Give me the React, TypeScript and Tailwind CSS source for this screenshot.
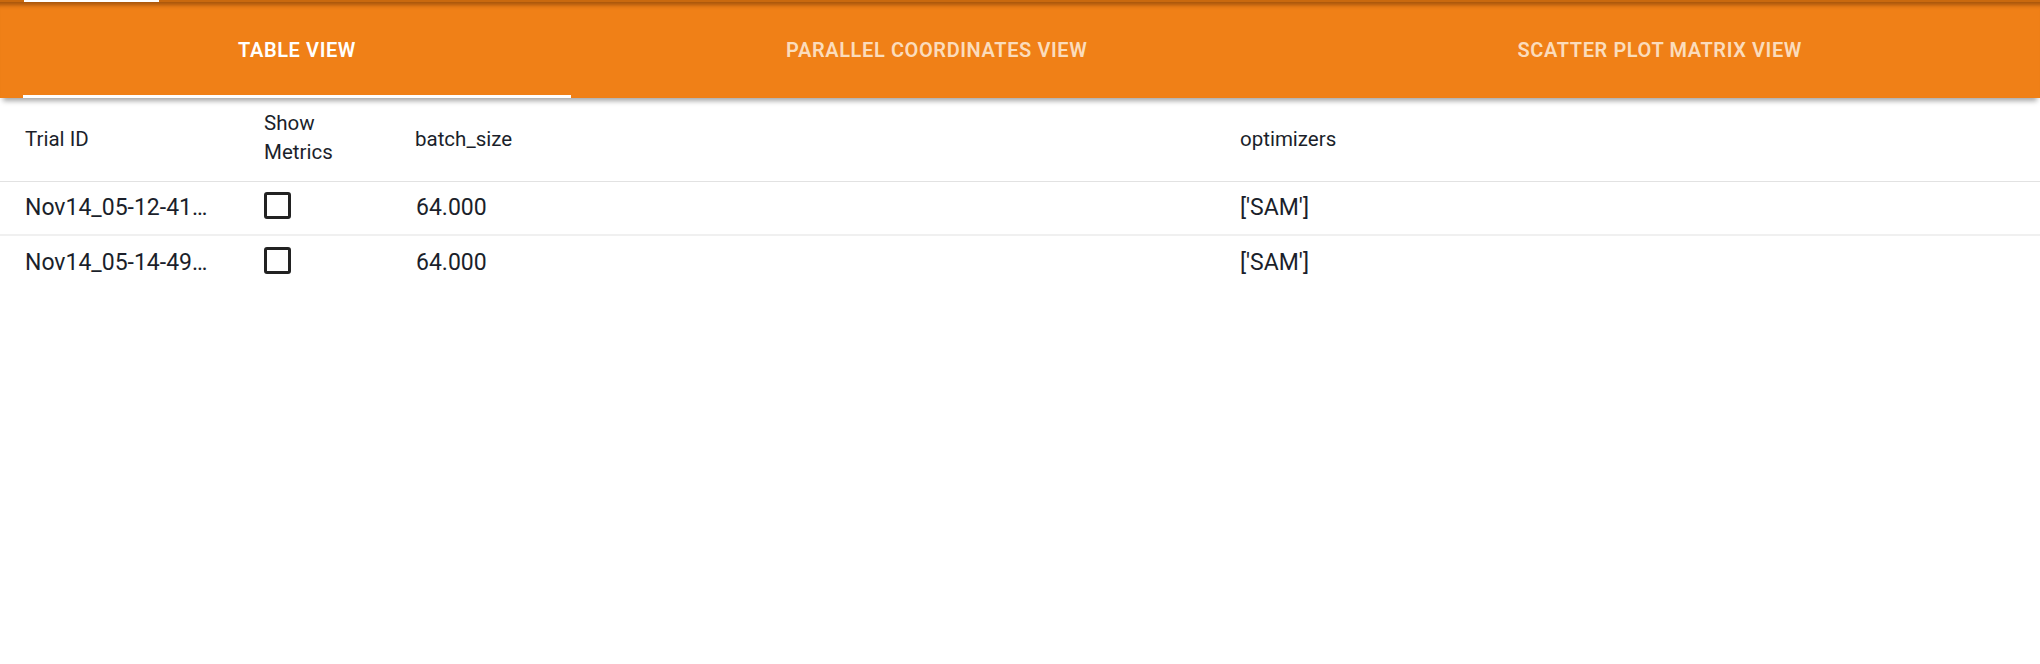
import React from 'react'

const tabs = [
  { label: 'TABLE VIEW', active: true },
  { label: 'PARALLEL COORDINATES VIEW', active: false },
  { label: 'SCATTER PLOT MATRIX VIEW', active: false },
]

const rows = [
  { id: 'Nov14_05-12-41…', batch: '64.000', opt: "['SAM']" },
  { id: 'Nov14_05-14-49…', batch: '64.000', opt: "['SAM']" },
]

const cols = 'grid grid-cols-[239px_152px_824px_1fr]'

const Checkbox = () => (
  <div className="w-[27px] h-[27px] rounded-[3px] border-[3px] border-[#222222] bg-white" />
)

const App = () => {
  return (
    <div className="w-[2040px] h-[664px] bg-white font-['Roboto',sans-serif] overflow-hidden">
      {/* app bar sliver above */}
      <div className="h-[2px] bg-[#c9690e]">
        <div className="ml-[24px] w-[135px] h-[2px] bg-white" />
      </div>

      {/* tab bar */}
      <div className="relative z-10 h-[96px] bg-[#f08017] shadow-[inset_0_7px_4px_-4px_rgba(90,40,0,0.5),0_6px_5px_-3px_rgba(0,0,0,0.35)]">
        <div className="mx-[23px] flex h-full">
          {tabs.map((t) => (
            <div
              key={t.label}
              className={`grow basis-auto px-4 flex items-center justify-center border-t-[3px] border-t-transparent border-b-[3px] ${
                t.active ? 'border-b-white text-white' : 'border-b-transparent text-[#fbdcbc]'
              }`}
            >
              <span className="text-[20px] font-semibold tracking-[0.03em]">{t.label}</span>
            </div>
          ))}
        </div>
      </div>

      {/* table */}
      <div className="text-[#1b1f2b]">
        <div className={`${cols} h-[84px] border-b border-[#e2e2e2] items-center text-[20.5px] leading-[29px]`}>
          <div className="pl-[25px]">Trial ID</div>
          <div className="pl-[25px] pb-[4px]">
            Show
            <br />
            Metrics
          </div>
          <div className="pl-[24px]">batch_size</div>
          <div className="pl-[25px]">optimizers</div>
        </div>

        {rows.map((r, i) => (
          <div
            key={i}
            className={`${cols} h-[54px] items-center text-[23px] ${
              i === 0 ? 'border-b-2 border-[#f0f0f0]' : ''
            }`}
          >
            <div className="pl-[25px] whitespace-nowrap">{r.id}</div>
            <div className="pl-[25px] pb-[6px]">
              <Checkbox />
            </div>
            <div className="pl-[25px]">{r.batch}</div>
            <div className="pl-[25px]">{r.opt}</div>
          </div>
        ))}
      </div>
    </div>
  )
}

export default App
